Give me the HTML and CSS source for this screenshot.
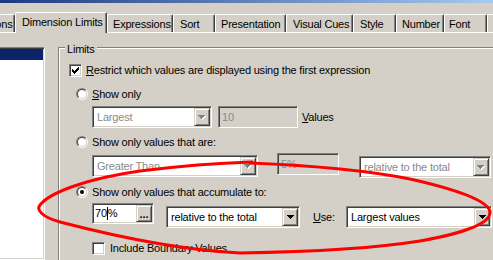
FILE: index.html
```html
<!DOCTYPE html>
<html lang="en">
<head>
    <meta charset="UTF-8">
    <meta name="viewport" content="width=device-width, initial-scale=1.0">
    <title>Chart Properties - Dimension Limits</title>
    <link rel="stylesheet" href="styles.css">
</head>
<body>
    <div class="dialog">
        <div class="titlebar"></div>

        <div class="tabbar">
            <div class="tab tab-dims">Dimensions</div>
            <div class="tab tab-active tab-limits">Dimension Limits</div>
            <div class="tab tab-expr">Expressions</div>
            <div class="tab tab-sort">Sort</div>
            <div class="tab tab-pres">Presentation</div>
            <div class="tab tab-cues">Visual Cues</div>
            <div class="tab tab-style">Style</div>
            <div class="tab tab-number">Number</div>
            <div class="tab tab-font">Font</div>
            <div class="tab tab-layout">Layout</div>
        </div>

        <div class="page">
            <div class="list">
                <div class="list-sel"></div>
            </div>

            <div class="group">
                <div class="legend">Limits</div>

                <div class="row row-restrict">
                    <span class="check">
                        <svg width="7" height="7" viewBox="0 0 7 7" shape-rendering="crispEdges"><path d="M6 0h1v1h-1zM5 1h2v1h-2zM0 2h1v1h-1zM4 2h3v1h-3zM0 3h2v1h-2zM3 3h3v1h-3zM0 4h5v1h-5zM1 5h3v1h-3zM2 6h1v1h-1z"/></svg>
                    </span>
                    <span><u>R</u>estrict which values are displayed using the first expression</span>
                </div>

                <div class="row row-radio row-show">
                    <span class="radio"><span class="radio-in"></span></span>
                    <span><u>S</u>how only</span>
                </div>

                <div class="row row-fields row-a">
                    <div class="combo combo-off w-largest">
                        <span class="combo-text">Largest</span>
                        <span class="drop">
                            <svg width="8" height="5" viewBox="0 0 8 5" shape-rendering="crispEdges"><path class="shade" d="M1 1h7v1H1zM2 2h5v1H2zM3 3h3v1H3zM4 4h1v1H4z"/><path class="arrow-off" d="M0 0h7v1H0zM1 1h5v1H1zM2 2h3v1H2zM3 3h1v1H3z"/></svg>
                        </span>
                    </div>
                    <div class="edit edit-off w-count">10</div>
                    <span class="values-label"><u>V</u>alues</span>
                </div>

                <div class="row row-radio row-values">
                    <span class="radio"><span class="radio-in"></span></span>
                    <span>Show only values that are:</span>
                </div>

                <div class="row row-fields row-b">
                    <div class="combo combo-off w-greater">
                        <span class="combo-text">Greater Than</span>
                        <span class="drop">
                            <svg width="8" height="5" viewBox="0 0 8 5" shape-rendering="crispEdges"><path class="shade" d="M1 1h7v1H1zM2 2h5v1H2zM3 3h3v1H3zM4 4h1v1H4z"/><path class="arrow-off" d="M0 0h7v1H0zM1 1h5v1H1zM2 2h3v1H2zM3 3h1v1H3z"/></svg>
                        </span>
                    </div>
                    <div class="edit edit-off w-percent">5%</div>
                    <div class="combo combo-off w-relative-off">
                        <span class="combo-text">relative to the total</span>
                        <span class="drop">
                            <svg width="8" height="5" viewBox="0 0 8 5" shape-rendering="crispEdges"><path class="shade" d="M1 1h7v1H1zM2 2h5v1H2zM3 3h3v1H3zM4 4h1v1H4z"/><path class="arrow-off" d="M0 0h7v1H0zM1 1h5v1H1zM2 2h3v1H2zM3 3h1v1H3z"/></svg>
                        </span>
                    </div>
                </div>

                <div class="row row-radio row-accum">
                    <span class="radio"><span class="radio-in radio-on"></span></span>
                    <span>Show only values that accumulate to:</span>
                </div>

                <div class="row row-fields row-c">
                    <div class="edit edit-accum">
                        <span class="edit-text">70<span class="caret"></span>%</span>
                        <span class="dots">...</span>
                    </div>
                    <div class="combo w-relative">
                        <span class="combo-text">relative to the total</span>
                        <span class="drop">
                            <svg width="7" height="4" viewBox="0 0 7 4" shape-rendering="crispEdges"><path d="M0 0h7v1H0zM1 1h5v1H1zM2 2h3v1H2zM3 3h1v1H3z"/></svg>
                        </span>
                    </div>
                    <span class="use-label"><u>U</u>se:</span>
                    <div class="combo w-use">
                        <span class="combo-text">Largest values</span>
                        <span class="drop">
                            <svg width="7" height="4" viewBox="0 0 7 4" shape-rendering="crispEdges"><path d="M0 0h7v1H0zM1 1h5v1H1zM2 2h3v1H2zM3 3h1v1H3z"/></svg>
                        </span>
                    </div>
                </div>

                <div class="row row-boundary">
                    <span class="check check-gap"></span>
                    <span>Include Boundary Values</span>
                </div>
            </div>
        </div>

        <!-- red marker drawn over the screenshot -->
        <svg class="marker" width="493" height="260" viewBox="0 0 493 260">
            <path d="M250 163 C300 165 360 169 410 179 C450 188 486 199 490 211 C492 224 460 234 420 241 C370 249 300 252 240 253 C180 250 110 235 60 222 C42 217 36 210 40 205 C50 192 90 178 140 171 C180 166 220 163 252 162" />
        </svg>
    </div>
</body>
</html>
```

FILE: styles.css
```css
body {
    margin: 0;
    background-color: #d4d0c8;
    font-family: "Liberation Sans", Arial, sans-serif;
    font-size: 11px;
    letter-spacing: -0.2px;
    color: #000;
}

.dialog {
    position: relative;
    width: 493px;
    height: 260px;
    overflow: hidden;
}

.titlebar {
    height: 3px;
    background: linear-gradient(90deg, #1c3a82, #a6caf0);
}

/* tabs */

.tabbar {
    display: flex;
    align-items: flex-end;
    height: 20px;
    margin-top: 9px;
}

.tab {
    flex: none;
    box-sizing: border-box;
    height: 18px;
    padding: 3px 0 1px 5px;
    line-height: 13px;
    white-space: nowrap;
    overflow: hidden;
    border-top: 1px solid #fff;
    border-left: 1px solid #fff;
    border-right: 1px solid #404040;
    border-radius: 2px 2px 0 0;
    box-shadow: inset -1px 0 #808080;
}

.tab-active {
    position: relative;
    z-index: 1;
    height: 21px;
    margin-bottom: -1px;
    padding-left: 6px;
    background-color: #d4d0c8;
}

.tab-dims { width: 64px; margin-left: -49px; }
.tab-limits { width: 92px; }
.tab-expr { width: 66px; }
.tab-sort { width: 42px; padding-left: 6px; }
.tab-pres { width: 71px; }
.tab-cues { width: 67px; padding-left: 6px; }
.tab-style { width: 43px; padding-left: 6px; }
.tab-number { width: 48px; }
.tab-font { width: 43px; padding-left: 4px; }
.tab-layout { width: 50px; }

/* page body */

.page {
    display: flex;
    height: 227px;
    border-top: 1px solid #fff;
}

.list {
    flex: none;
    box-sizing: border-box;
    width: 47px;
    margin: 14px 0 0 -2px;
    padding-top: 1px;
    border: 1px solid;
    border-color: #808080 #fff #fff #808080;
    box-shadow: inset 1px 1px #404040, inset -1px -1px #d4d0c8;
    background-color: #fff;
}

.list-sel {
    height: 11px;
    margin: 0 1px;
    background-color: #0a246a;
}

.group {
    flex: 1;
    margin: 14px 0 0 13px;
    border-top: 1px solid #808080;
    border-left: 1px solid #808080;
    box-shadow: inset 1px 1px #fff;
}

.legend {
    width: fit-content;
    margin: -5px 0 0 6px;
    padding: 0 2px;
    line-height: 13px;
    background-color: #d4d0c8;
}

.row {
    display: flex;
    align-items: center;
    line-height: 13px;
    white-space: nowrap;
}

.row-fields {
    align-items: flex-start;
}

.row-restrict { margin: 8px 0 0 10px; }
.row-show { margin: 11px 0 0 17px; }
.row-a { margin: 5px 0 0 33px; }
.row-values { margin: 8px 0 0 17px; }
.row-b { margin: 4px 0 0 33px; }
.row-accum { margin: 8px 0 0 17px; }
.row-c { margin: 4px 0 0 33px; }
.row-boundary { margin: 14px 0 0 33px; }

/* checkbox and radio */

.check {
    flex: none;
    box-sizing: border-box;
    width: 13px;
    height: 13px;
    margin-right: 4px;
    padding: 2px 0 0 2px;
    border: 1px solid;
    border-color: #808080 #fff #fff #808080;
    box-shadow: inset 1px 1px #404040, inset -1px -1px #d4d0c8;
    background-color: #fff;
}

.check svg {
    display: block;
}

.check-gap {
    margin-right: 5px;
}

.radio {
    flex: none;
    box-sizing: border-box;
    width: 12px;
    height: 12px;
    margin: -1px 4px 0 0;
    border: 1px solid;
    border-color: #808080 #fff #fff #808080;
    border-radius: 50%;
}

.radio-in {
    display: flex;
    align-items: center;
    justify-content: center;
    box-sizing: border-box;
    width: 10px;
    height: 10px;
    border: 1px solid;
    border-color: #404040 #d4d0c8 #d4d0c8 #404040;
    border-radius: 50%;
    background-color: #fff;
}

.radio-on::after {
    content: "";
    width: 4px;
    height: 4px;
    border-radius: 50%;
    background-color: #000;
}

/* combo boxes and edits */

.combo,
.edit {
    flex: none;
    display: flex;
    box-sizing: border-box;
    height: 22px;
    padding: 1px;
    border: 1px solid;
    border-color: #808080 #fff #fff #808080;
    box-shadow: inset 1px 1px #404040, inset -1px -1px #d4d0c8;
    background-color: #fff;
}

.combo-text {
    flex: 1;
    padding-left: 3px;
    line-height: 18px;
    overflow: hidden;
}

.combo-off .combo-text,
.edit-off {
    color: #8a8a8a;
}

.drop {
    flex: none;
    display: flex;
    align-items: center;
    justify-content: center;
    box-sizing: border-box;
    width: 16px;
    height: 18px;
    border: 1px solid;
    border-color: #d4d0c8 #404040 #404040 #d4d0c8;
    box-shadow: inset 1px 1px #fff, inset -1px -1px #808080;
    background-color: #d4d0c8;
}

.drop svg {
    display: block;
}

.shade {
    fill: #fff;
}

.arrow-off {
    fill: #808080;
}

.edit {
    padding-left: 3px;
    line-height: 18px;
}

.edit-off {
    background-color: #d4d0c8;
}

.edit-accum {
    height: 21px;
    padding: 1px;
}

.edit-text {
    flex: 1;
    padding-left: 1px;
    line-height: 17px;
}

.caret {
    display: inline-block;
    width: 0;
    height: 13px;
    border-left: 1px solid #000;
    vertical-align: -3px;
}

.dots {
    flex: none;
    box-sizing: border-box;
    width: 16px;
    height: 17px;
    border: 1px solid;
    border-color: #d4d0c8 #404040 #404040 #d4d0c8;
    box-shadow: inset 1px 1px #fff, inset -1px -1px #808080;
    background-color: #d4d0c8;
    font-weight: bold;
    line-height: 17px;
    text-align: center;
    letter-spacing: 0;
}

.w-largest { width: 120px; }
.w-count { width: 80px; margin-left: 6px; }
.w-greater { width: 166px; margin-top: 2px; }
.w-percent { width: 62px; margin-left: 19px; }
.w-relative-off { width: 132px; margin: 3px 0 0 20px; }
.w-relative { width: 134px; margin: 3px 0 0 12px; }
.w-use { width: 146px; margin-top: 3px; }

.edit-accum { width: 62px; }

.values-label {
    margin: 5px 0 0 4px;
}

.use-label {
    width: 33px;
    margin: 8px 0 0 13px;
}

/* red hand-drawn ellipse on top */

.marker {
    position: absolute;
    top: 0;
    left: 0;
    pointer-events: none;
}

.marker path {
    fill: none;
    stroke: #f00;
    stroke-width: 3;
    stroke-linecap: round;
}
```
